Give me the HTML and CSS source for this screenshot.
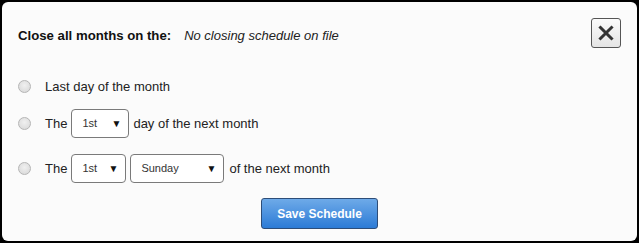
FILE: index.html
```html
<!DOCTYPE html>
<html>
<head>
<meta charset="utf-8">
<link rel="stylesheet" href="styles.css">
</head>
<body>
<div class="panel">
  <div class="header">
    <div class="title"><span class="label">Close all months on the:</span><span class="status">No closing schedule on file</span></div>
    <button class="close" type="button" aria-label="Close">
      <svg width="16" height="16" viewBox="0 0 16 16"><path d="M2.5 2.5 L13.5 13.5 M13.5 2.5 L2.5 13.5" stroke="#333" stroke-width="3" stroke-linecap="square"/></svg>
    </button>
  </div>
  <div class="row r1"><span class="radio"></span><span class="txt">Last day of the month</span></div>
  <div class="row r2"><span class="radio"></span><span class="txt">The</span><div class="sel w58"><span>1st</span><i>▼</i></div><span class="txt">day of the next month</span></div>
  <div class="row r3"><span class="radio"></span><span class="txt">The</span><div class="sel w55"><span>1st</span><i>▼</i></div><div class="sel w94"><span>Sunday</span><i>▼</i></div><span class="txt">of the next month</span></div>
  <div class="actions"><button class="save" type="button">Save Schedule</button></div>
</div>
</body>
</html>
```
FILE: styles.css
```css
html, body { margin: 0; padding: 0; }
body { background: #000; width: 639px; height: 243px; overflow: hidden; font-family: "Liberation Sans", Arial, sans-serif; }
.panel { margin: 2px; width: 635px; height: 239px; background: #fbfbfb; border-radius: 6px; box-sizing: border-box; padding: 0 16px; }
.header { display: flex; align-items: center; justify-content: space-between; padding-top: 16px; height: 30px; }
.title { display: flex; align-items: baseline; padding-top: 5px; }
.label { font-weight: bold; font-size: 13.2px; color: #111; }
.status { font-style: italic; font-size: 13px; color: #222; margin-left: 13px; }
.close { width: 30px; height: 30px; margin-right: 0; padding: 0; border: 1px solid #555; border-radius: 3px; background: linear-gradient(#fbfbfb, #e4e4e4); display: flex; align-items: center; justify-content: center; }
.row { display: flex; align-items: center; height: 30px; font-size: 13px; color: #222; }
.r1 { margin-top: 23px; }
.r2 { margin-top: 7px; }
.r3 { margin-top: 15px; }
.radio { width: 11px; height: 11px; border-radius: 50%; border: 1px solid #b5b5b5; background: radial-gradient(circle at 50% 40%, #f0f0f0, #d6d6d6); margin-left: 0; margin-right: 14px; flex: none; }
.txt { white-space: nowrap; }
.sel { height: 29px; box-sizing: border-box; border: 1px solid #7a7a7a; border-radius: 4px; background: #fff; display: flex; align-items: center; justify-content: space-between; padding: 0 7px 0 10px; font-size: 11px; color: #333; margin: 0 4px; }
.sel i { font-style: normal; font-size: 10px; color: #111; }
.w58 { width: 58px; margin-left: 4px; }
.w55 { width: 55px; margin-left: 4px; }
.w94 { width: 94px; margin-left: 0; margin-right: 5px; }
.r3 .w55 { margin-right: 4px; }
.actions { display: flex; justify-content: center; margin-top: 15px; }
.save { width: 117px; height: 31px; border: 1px solid #2d4d78; border-radius: 3px; background: linear-gradient(#6eaae8, #2c7bd6); color: #fff; font-family: "Liberation Sans", Arial, sans-serif; font-weight: bold; font-size: 12px; padding: 0; }
```
